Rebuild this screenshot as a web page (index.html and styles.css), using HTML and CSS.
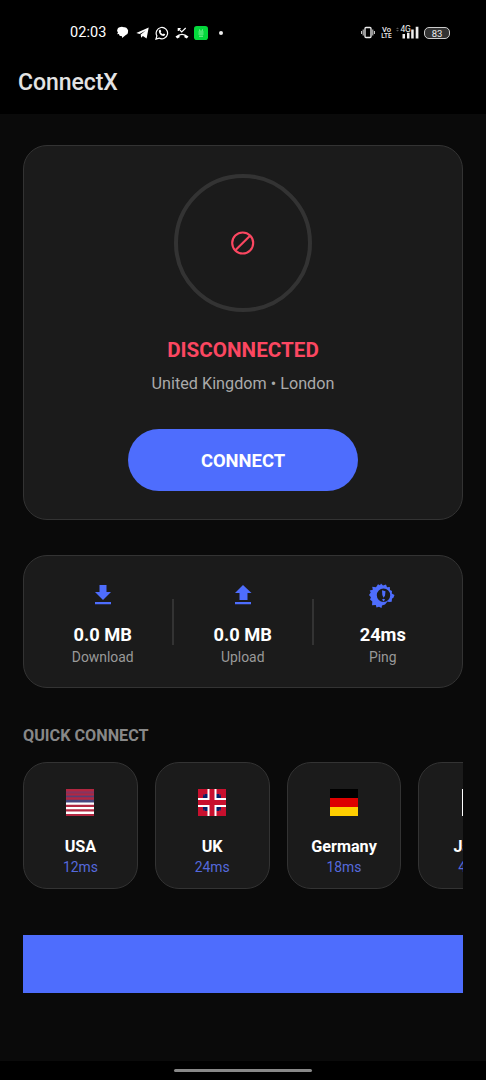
FILE: index.html
```html
<!DOCTYPE html>
<html lang="en">
<head>
<meta charset="utf-8">
<title>ConnectX</title>
<link rel="stylesheet" href="styles.css">
</head>
<body>
<div class="app">
  <header class="top">
    <div class="status">
      <div class="status-left">
        <span class="time">02:03</span>
        <svg class="ico-chat" width="13" height="13" viewBox="0 0 13 13"><path fill="#fff" d="M3.500 1.200Q6 .300 8 1.200Q10.500 .800 11.200 2.800Q12.600 4 12 6.200Q12 8.300 9.800 9L6.200 12L6 10.200Q3 10.200 3 8L1.200 8.200L2 6.300Q.400 5 1.400 3.500Q1.600 1.700 3.500 1.200Z"/></svg>
        <svg class="ico-telegram" width="13" height="12" viewBox="0 0 13 12"><path fill="#fff" d="M.3 5.900L12.700.500L10.600 11.500L6.900 8.900L5.200 10.700L4.700 7.500L9.800 3.400L3.600 7.100Z"/></svg>
        <svg class="ico-whatsapp" width="14" height="14" viewBox="0 0 14 14"><path fill="none" stroke="#fff" stroke-width="1.200" d="M1 13L1.900 9.900A5.700 5.700 0 1 1 4.100 12.100Z"/><path fill="#fff" d="M4.500 3.700L5.600 3.800L6.200 5.400L5.600 6.200Q6.500 7.700 7.900 8.300L8.700 7.500L10.200 8.200Q10.100 9.900 8.400 10Q4.300 9.400 3.800 5.300Q3.900 4.200 4.500 3.700Z"/></svg>
        <svg class="ico-missed" width="14" height="12" viewBox="0 0 14 12"><path fill="none" stroke="#fff" stroke-width="1.200" d="M3.300 4V1.500H5.700M3.500 1.700L6.700 5L10.700 1"/><path fill="#fff" d="M.500 9.500Q7 4 13.500 9.500L11.800 11.400L9.400 10.200V8.500Q7 7.700 4.600 8.500V10.200L2.200 11.400Z"/></svg>
        <svg class="ico-green" width="14" height="14" viewBox="0 0 14 14"><rect width="14" height="14" rx="2.800" fill="#04d83c"/><path fill="none" stroke="#8cf0a2" d="M5.500 3.500L6 5M8.500 3.500L8 5M4.500 6H9.500M4.500 8H9.500M5 10.200H9"/></svg>
        <span class="dot"></span>
      </div>
      <div class="status-right">
        <svg width="14" height="13" viewBox="0 0 14 13"><rect x="4" y="1.500" width="6" height="10" rx="1" fill="none" stroke="#eee" stroke-width="1.300"/><path fill="none" stroke="#ddd" d="M2.200 3.500V9.500M11.800 3.500V9.500M.600 5V8M13.400 5V8"/></svg>
        <span class="volte"><span>Vo</span><span>LTE</span></span>
        <svg class="ico-signal" width="24" height="15" viewBox="0 0 24 15"><path fill="#555" d="M0 4H3L1.500 2.500ZM0 5H3L1.500 6.500Z"/><text class="net" x="4.500" y="6.800">4G</text><path fill="#eee" d="M6.500 9H9V13.500H6.500ZM11 7.800H13.500V13.500H11ZM15.200 4.500H17.700V13.500H15.200ZM19.700 1.800H22.400V13.500H19.700Z"/></svg>
        <span class="battery">83</span>
      </div>
    </div>
    <h1 class="title">ConnectX</h1>
  </header>

  <main class="content">
    <section class="card connection">
      <div class="ring">
        <svg width="24" height="24" viewBox="0 0 24 24"><circle cx="11.700" cy="12" r="10.500" fill="none" stroke="#fc4761" stroke-width="2.100"/><path stroke="#fc4761" stroke-width="2.100" d="M4.600 19.100L18.800 4.900"/></svg>
      </div>
      <div class="state">DISCONNECTED</div>
      <div class="place">United Kingdom • London</div>
      <button class="connect">CONNECT</button>
    </section>

    <section class="card stats">
      <div class="stat">
        <svg width="28" height="28" viewBox="0 0 28 28"><path fill="#4e6dfd" d="M10.500 4H17.500V11H22L14 19L6 11H10.500ZM6 21H22V23.200H6Z"/></svg>
        <b>0.0 MB</b><span>Download</span>
      </div>
      <i class="rule"></i>
      <div class="stat">
        <svg width="28" height="28" viewBox="0 0 28 28"><path fill="#4e6dfd" d="M14 4L22.500 12H18.500V19H10.500V12H6ZM6 21H22V23.200H6Z"/></svg>
        <b>0.0 MB</b><span>Upload</span>
      </div>
      <i class="rule"></i>
      <div class="stat">
        <svg width="28" height="28" viewBox="1.500 0 28 28"><path fill="#4e6dfd" fill-rule="evenodd" d="M10.500 3.200L12.500 4.300L13.500 2.400L15.500 4.500L18.500 3.600L19.500 6.300L22.300 6L22.500 9L24.500 10L24.300 12.500L27 14L25.800 17L24.500 17.500L24.200 20.800L21.500 21L20 20.400L17.500 23.500L14.500 24.500L14 27L11.500 25.800L9 26.500L8.300 24L4.500 24.200L4.800 20.500L2.500 18.500L3.400 16.300L1.500 14L3.200 11.500L2.200 9.500L5.300 8.800L4.700 5.700L8.500 6.200ZM16 7.500A6.700 6.700 0 1 0 16 20.900A6.700 6.700 0 1 0 16 7.500Z"/><path fill="#4e6dfd" d="M14.500 9.300L18 10.300L17.500 14.800L16 16.800L14.800 14ZM14.500 18.500L16 17.700L17.700 18.500L16 20.500Z"/></svg>
        <b>24ms</b><span>Ping</span>
      </div>
    </section>

    <h2 class="heading">QUICK CONNECT</h2>
    <div class="servers">
      <div class="card server">
        <svg class="flag" viewBox="0 0 28 27" preserveAspectRatio="none"><path fill="#fff" d="M0 0H28V27H0Z"/><path fill="#46467f" d="M0 0H28V13.500H0Z"/><path fill="#b22741" d="M0 0H28V2.500H0ZM0 4.200H28V6.400H0ZM0 8.200H28V10.800H0ZM0 15.800H28V18H0ZM0 20.300H28V22.500H0ZM0 25H28V27H0Z"/><path fill="#a32c51" opacity=".7" d="M0 2H28V4H0ZM0 6.400H28V7.200H0Z"/></svg>
        <b>USA</b><span>12ms</span>
      </div>
      <div class="card server">
        <svg class="flag" viewBox="0 0 28 27" preserveAspectRatio="none"><path fill="#c8102e" d="M0 0H28V27H0Z"/><path fill="#012169" d="M5 5H23V22H5Z"/><path fill="#72204f" d="M5 5H7V6.500H5ZM21 5H23V6.500H21ZM5 20.500H7V22H5ZM21 20.500H23V22H21Z"/><path fill="#fff" d="M9.500 0H18.500V9H28V18H18.500V27H9.500V18H0V9H9.500Z"/><path fill="#c8102e" d="M11.500 0H16.500V11H28V16H16.500V27H11.500V16H0V11H11.500Z"/></svg>
        <b>UK</b><span>24ms</span>
      </div>
      <div class="card server">
        <svg class="flag" viewBox="0 0 28 27" preserveAspectRatio="none"><path d="M0 0H28V9H0Z"/><path fill="#d00" d="M0 9H28V18H0Z"/><path fill="#ffce00" d="M0 18H28V27H0Z"/></svg>
        <b>Germany</b><span>18ms</span>
      </div>
      <div class="card server">
        <svg class="flag" viewBox="0 0 28 27" preserveAspectRatio="none"><path fill="#fff" d="M0 0H28V27H0Z"/><circle cx="14" cy="13.500" r="7" fill="#bc002d"/></svg>
        <b>Japan</b><span>45ms</span>
      </div>
    </div>
    <div class="banner"></div>
  </main>
  <footer class="nav"><span class="handle"></span></footer>
</div>
</body>
</html>
```
FILE: styles.css
```css
* { box-sizing: border-box; }
body { margin: 0; background: #0a0a0a; font-family: Roboto, sans-serif; }
svg { display: block; flex: none; }
.app { width: 486px; height: 1080px; display: flex; flex-direction: column; background: #0a0a0a; overflow: hidden; }
.top { height: 114px; background: #000; flex: none; }
.status { height: 65px; padding: 0 36px 0 70px; display: flex; justify-content: space-between; align-items: center; }
.status-left, .status-right { display: flex; align-items: center; }
.time { width: 46px; padding-top: 1px; color: #fff; font-size: 14.5px; font-weight: 400; letter-spacing: .1px; line-height: 18px; }
.ico-telegram { margin-left: 7px; }
.ico-whatsapp { margin-left: 6px; }
.ico-missed { margin-left: 6px; }
.ico-green { margin-left: 5px; }
.dot { width: 4px; height: 4px; margin-left: 11px; border-radius: 50%; background: #eee; }
.volte { width: 11px; margin-left: 6px; display: flex; flex-direction: column; align-items: center; color: #eee; font-size: 6.5px; font-weight: 500; line-height: 6px; }
.volte span:first-child { font-size: 7.5px; }
.ico-signal { margin: 0 0 0 4px; }
.net { fill: #eee; font-size: 8.5px; font-weight: 400; letter-spacing: -.4px; }
.battery { width: 26px; height: 12px; margin-left: 4px; border: 1px solid #ccc; border-radius: 5px; background: #333; color: #eee; font-size: 9.5px; line-height: 11px; text-align: center; }
.title { margin: 2px 0 0 18px; color: #e3e3e3; font-size: 23px; font-weight: 500; line-height: 31px; letter-spacing: -.05px; }

.content { flex: 1; padding: 31px 23px 0; display: flex; flex-direction: column; }
.card { flex: none; background: #1b1b1b; border: 1.5px solid #333; border-radius: 24px; }
.connection { height: 375px; padding-top: 28px; display: flex; flex-direction: column; align-items: center; }
.ring { width: 138px; height: 138px; border: 4px solid #333; border-radius: 50%; display: flex; align-items: center; justify-content: center; }
.state { margin-top: 24px; color: #fc4761; font-size: 20.65px; font-weight: 700; line-height: 28px; }
.place { margin-top: 8px; color: #aaa; font-size: 16.2px; line-height: 24px; }
.connect { width: 230px; height: 62.5px; margin: 32.5px 0 0; padding: 0; border: 0; border-radius: 31px; background: #4e6dfd; color: #fff; font: 700 18.4px/64px Roboto, sans-serif; }

.stats { height: 133px; margin-top: 35px; padding: 0 10px 0 9.5px; display: flex; align-items: center; }
.stat { flex: 1 1 0; height: 100%; padding-top: 25px; display: flex; flex-direction: column; align-items: center; }
.stat svg { margin-left: 1px; }
.stat b { margin-top: 14px; color: #fff; font-size: 18.3px; font-weight: 700; line-height: 24px; }
.stat span { color: #999; font-size: 13.9px; line-height: 20px; }
.rule { width: 1.5px; height: 46px; background: #333; }

.heading { margin: 38px 0 0; color: #888; font-size: 16.2px; font-weight: 700; line-height: 20px; }
.servers { height: 127px; margin-top: 16px; display: flex; gap: 17px; overflow: hidden; flex: none; }
.server { width: 114.8px; height: 127px; padding-top: 26px; display: flex; flex-direction: column; align-items: center; }
.flag { width: 28px; height: 27px; }
.server b { margin-top: 21px; color: #fff; font-size: 16.2px; font-weight: 700; line-height: 20px; }
.server span { color: #5569dc; font-size: 13.9px; line-height: 20px; }
.banner { height: 58px; margin-top: 46px; background: #4e6dfd; flex: none; }
.nav { height: 19px; background: #000; flex: none; display: flex; justify-content: center; padding-top: 8px; }
.handle { width: 138px; height: 3px; border-radius: 2px; background: #888; }
```
